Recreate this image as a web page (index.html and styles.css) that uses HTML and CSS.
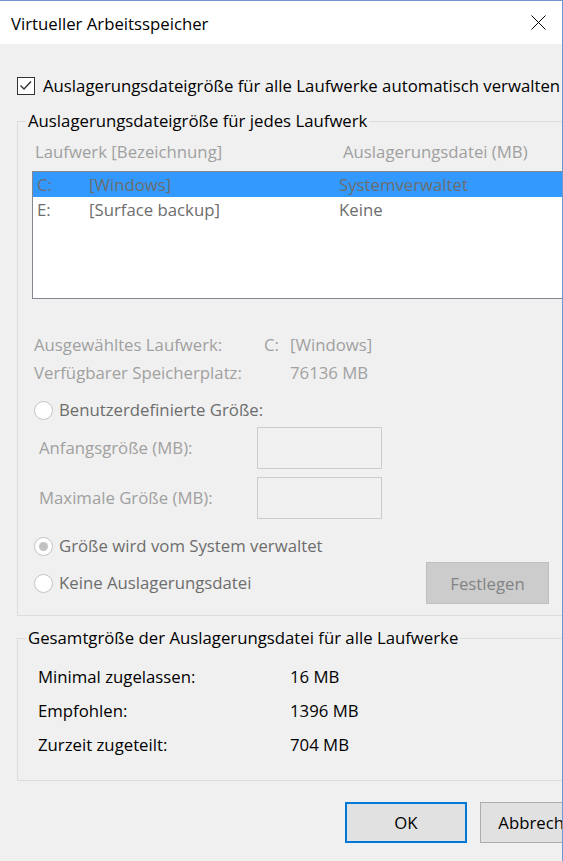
FILE: index.html
```html
<!DOCTYPE html>
<html lang="de">
	<head>
		<meta charset="UTF-8" />
		<title>Virtueller Arbeitsspeicher</title>
		<link rel="stylesheet" href="styles.css">
	</head>
	<body>
		<div class="window">
			<header class="titlebar">
				<span class="title">Virtueller Arbeitsspeicher</span>
				<button class="close" type="button">
					<svg width="15" height="15" viewBox="0 0 15 15">
						<path d="M0.5 0.5 L14.5 14.5 M14.5 0.5 L0.5 14.5" stroke="#000" stroke-width="1" fill="none" />
					</svg>
				</button>
			</header>

			<div class="content">
				<label class="check">
					<span class="check-box">
						<svg width="16" height="16" viewBox="0 0 16 16">
							<path d="M2.5 7.5 L6 11 L13 3.5" stroke="#333" stroke-width="1.4" fill="none" />
						</svg>
					</span>
					Auslagerungsdateigröße für alle Laufwerke automatisch verwalten
				</label>

				<fieldset class="group drives">
					<legend>Auslagerungsdateigröße für jedes Laufwerk</legend>
					<div class="group-body">
						<div class="list-head">
							<span>Laufwerk [Bezeichnung]</span>
							<span>Auslagerungsdatei (MB)</span>
						</div>
						<div class="drive-list">
							<div class="drive-row selected">
								<span>C:</span>
								<span>[Windows]</span>
								<span>Systemverwaltet</span>
							</div>
							<div class="drive-row">
								<span>E:</span>
								<span>[Surface backup]</span>
								<span>Keine</span>
							</div>
						</div>

						<div class="info">
							<span>Ausgewähltes Laufwerk:</span>
							<span>C:</span>
							<span>[Windows]</span>
							<span>Verfügbarer Speicherplatz:</span>
							<span class="info-value">76136 MB</span>
						</div>

						<label class="radio custom">
							<span class="radio-dot"></span>
							Benutzerdefinierte Größe:
						</label>
						<div class="size-row first">
							<span>Anfangsgröße (MB):</span>
							<input type="text" disabled />
						</div>
						<div class="size-row">
							<span>Maximale Größe (MB):</span>
							<input type="text" disabled />
						</div>

						<label class="radio system">
							<span class="radio-dot checked"></span>
							Größe wird vom System verwaltet
						</label>
						<div class="radio-row">
							<label class="radio">
								<span class="radio-dot"></span>
								Keine Auslagerungsdatei
							</label>
							<button class="btn btn-disabled" type="button" disabled>Festlegen</button>
						</div>
					</div>
				</fieldset>

				<fieldset class="group totals">
					<legend>Gesamtgröße der Auslagerungsdatei für alle Laufwerke</legend>
					<div class="group-body">
						<div class="totals-grid">
							<span>Minimal zugelassen:</span>
							<span>16 MB</span>
							<span>Empfohlen:</span>
							<span>1396 MB</span>
							<span>Zurzeit zugeteilt:</span>
							<span>704 MB</span>
						</div>
					</div>
				</fieldset>

				<div class="actions">
					<button class="btn btn-default" type="button">OK</button>
					<button class="btn" type="button">Abbrechen</button>
				</div>
			</div>
		</div>
	</body>
</html>
```

FILE: styles.css
```css
* {
	box-sizing: border-box;
}
body {
	margin: 0;
	background: #f0f0f0;
	font-family: "Open Sans", "Liberation Sans", sans-serif;
	font-size: 16.75px;
	line-height: 20px;
	color: #000;
}
.window {
	width: 563px;
	height: 861px;
	border-top: 1px solid #7196d0;
	border-right: 1px solid #7196d0;
	overflow: hidden;
	background: #f0f0f0;
}
.titlebar {
	height: 43px;
	background: #fff;
	display: flex;
	align-items: center;
	justify-content: space-between;
	padding-left: 11px;
}
.title {
	padding-top: 2px;
}
.close {
	width: 44px;
	height: 43px;
	margin-right: 2px;
	padding: 0;
	border: none;
	background: none;
	display: flex;
	align-items: center;
	justify-content: center;
}
.content {
	width: 640px;
	padding: 32px 0 0 17px;
}

/* checkbox */
.check {
	display: flex;
	align-items: center;
	gap: 8px;
	height: 20px;
	white-space: nowrap;
}
.check-box {
	flex: none;
	width: 18px;
	height: 18px;
	border: 1px solid #333;
	background: #fff;
	display: flex;
}

/* group boxes */
.group {
	width: 620px;
	min-width: 0;
	margin: 15px 0 0;
	padding: 11px 0 11px 8px;
	border: 1px solid #dcdcdc;
}
.group legend {
	padding: 0 2px;
	line-height: 20px;
}
.group-body {
	padding-left: 6px;
}

/* drive list */
.list-head {
	display: grid;
	grid-template-columns: 308px auto;
	padding-left: 3px;
	color: #a0a0a0;
}
.drive-list {
	margin-top: 9px;
	height: 128px;
	border: 1px solid #828790;
	background: #fff;
}
.drive-row {
	display: grid;
	grid-template-columns: 52px 250px auto;
	height: 25px;
	line-height: 25px;
	padding-left: 4px;
	color: #6d6d6d;
}
.drive-row.selected {
	background: #3399ff;
}

/* selected drive details */
.info {
	display: grid;
	grid-template-columns: 230px 26px auto;
	row-gap: 8px;
	margin-top: 36px;
	padding-left: 2px;
	color: #a0a0a0;
}
.info-value {
	grid-column: 3;
}

/* radios */
.radio {
	display: flex;
	align-items: center;
	gap: 6px;
	height: 20px;
	padding-left: 2px;
	color: #6d6d6d;
	white-space: nowrap;
}
.radio.custom {
	margin-top: 17px;
}
.radio.system {
	margin-top: 17px;
}
.radio-dot {
	flex: none;
	width: 19px;
	height: 19px;
	border: 1px solid #c4c4c4;
	border-radius: 50%;
	background: #fff;
	display: flex;
	align-items: center;
	justify-content: center;
}
.radio-dot.checked::after {
	content: "";
	width: 9px;
	height: 9px;
	border-radius: 50%;
	background: #c2c2c2;
}
.radio-row {
	display: grid;
	grid-template-columns: 394px 123px;
	align-items: center;
	margin-top: 6px;
}

/* custom size inputs */
.size-row {
	display: grid;
	grid-template-columns: 218px 125px;
	align-items: center;
	margin-top: 8px;
	padding-left: 7px;
	color: #a0a0a0;
}
.size-row.first {
	margin-top: 7px;
}
.size-row input {
	width: 125px;
	height: 42px;
	margin: 0;
	border: 1px solid #cccccc;
	background: #f0f0f0;
}

/* totals */
.totals {
	margin-top: 12px;
	padding: 19px 0 25px 8px;
}
.totals-grid {
	display: grid;
	grid-template-columns: 252px auto;
	row-gap: 14px;
	padding-left: 6px;
}

/* buttons */
.btn {
	flex: none;
	width: 122px;
	height: 41px;
	padding: 0;
	border: 1px solid #adadad;
	background: #e1e1e1;
	font-family: inherit;
	font-size: 16.75px;
	color: #000;
	white-space: nowrap;
}
.btn-default {
	border: 2px solid #0078d7;
}
.btn-disabled {
	width: 123px;
	height: 42px;
	border-color: #bfbfbf;
	background: #cccccc;
	color: #838383;
}
.actions {
	display: flex;
	gap: 13px;
	margin: 21px 0 0 328px;
}
```
